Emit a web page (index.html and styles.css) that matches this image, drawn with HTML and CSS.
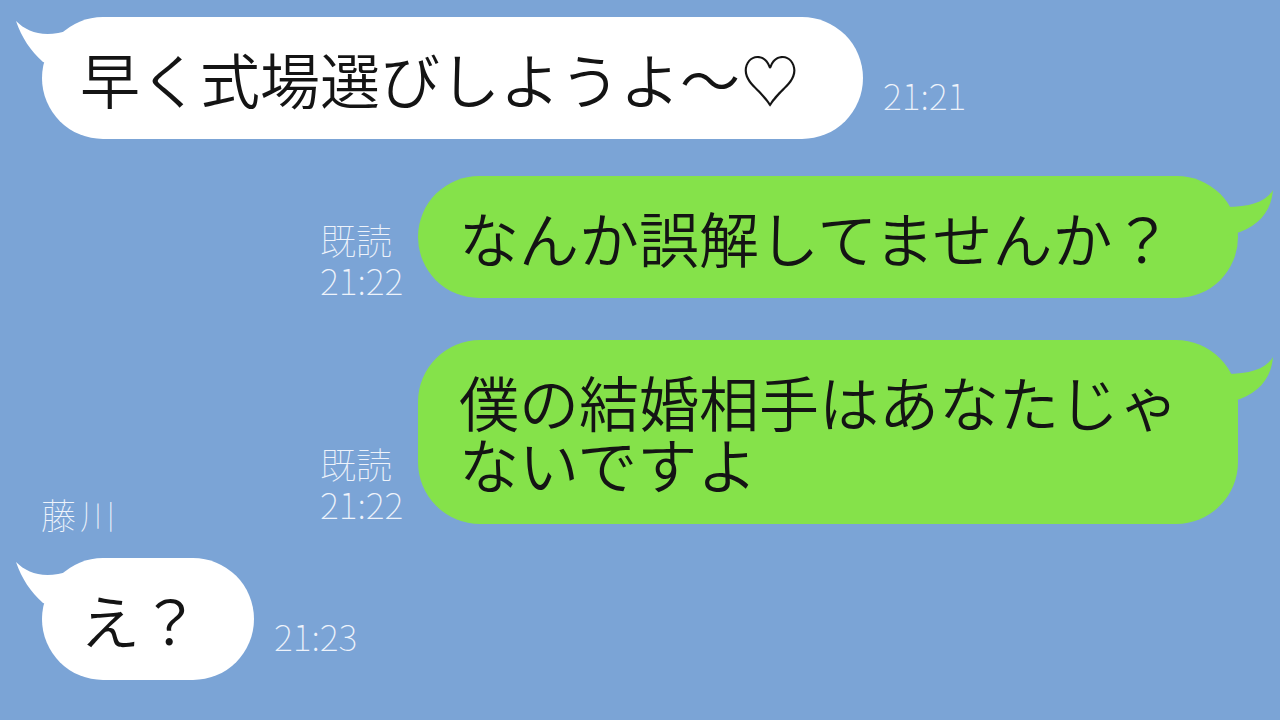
FILE: index.html
```html
<!DOCTYPE html>
<html lang="ja">
<head>
<meta charset="utf-8">
<title>chat</title>
<link rel="stylesheet" href="styles.css">
</head>
<body>
<div class="chat">
  <div class="row row-in row-1">
    <div class="bubble bubble-white bubble-wide">
      <svg class="tail tail-left" width="60" height="60" viewBox="0 0 60 60"><path d="M2,4 C14,16 31,21 56,13 L56,53 L29,45 C16,33 8,21 2,4 Z" fill="#ffffff"/></svg>
      <p class="msg">早く式場選びしようよ〜♡</p>
    </div>
    <div class="time time-in">21:21</div>
  </div>

  <div class="row row-out row-2">
    <div class="meta">
      <div class="read">既読</div>
      <div class="time">21:22</div>
    </div>
    <div class="bubble bubble-green">
      <svg class="tail tail-right" width="60" height="70" viewBox="0 0 60 70"><path d="M55,14 C48,26 32,31 8,31 L8,60 L22,56 C42,48 53,35 55,14 Z" fill="#85e24a"/></svg>
      <p class="msg">なんか誤解してませんか？</p>
    </div>
  </div>

  <div class="row row-out row-3">
    <div class="meta meta-low">
      <div class="read">既読</div>
      <div class="time">21:22</div>
    </div>
    <div class="bubble bubble-green">
      <svg class="tail tail-right" width="60" height="70" viewBox="0 0 60 70"><path d="M55,17 C48,29 32,34 8,34 L8,63 L22,59 C42,51 53,38 55,17 Z" fill="#85e24a"/></svg>
      <p class="msg">僕の結婚相手はあなたじゃ<br>ないですよ</p>
    </div>
  </div>

  <div class="group-in">
    <div class="name">藤川</div>
    <div class="row row-in">
      <div class="bubble bubble-white bubble-short">
        <svg class="tail tail-left" width="60" height="60" viewBox="0 0 60 60"><path d="M2,4 C14,16 31,21 56,13 L56,53 L29,45 C16,33 8,21 2,4 Z" fill="#ffffff"/></svg>
        <p class="msg">え？</p>
      </div>
      <div class="time time-in">21:23</div>
    </div>
  </div>
</div>
</body>
</html>
```

FILE: styles.css
```css
html, body {
  margin: 0;
  padding: 0;
}
body {
  width: 1280px;
  height: 720px;
  overflow: hidden;
  background: #7ba4d6;
  font-family: "Noto Sans CJK JP", "Noto Sans", sans-serif;
}
.chat {
  display: flex;
  flex-direction: column;
  padding-top: 17px;
}
.row {
  display: flex;
  align-items: flex-end;
}
.row-in {
  margin-left: 42px;
  gap: 20px;
}
.row-out {
  justify-content: flex-end;
  margin-right: 42px;
  gap: 10px;
}
.row-2 {
  margin-top: 37px;
}
.row-3 {
  margin-top: 42px;
}
.bubble {
  position: relative;
  box-sizing: border-box;
  border-radius: 62px;
  padding: 30px 40px 30px 38px;
}
.bubble-white {
  background: #ffffff;
}
.bubble-wide {
  width: 821px;
}
.bubble-short {
  padding-right: 54px;
}
.bubble-green {
  background: #85e24a;
  width: 820px;
  padding-left: 41px;
}
.msg {
  margin: 0;
  font-size: 60px;
  line-height: 62px;
  color: #141414;
  font-weight: 350;
  white-space: nowrap;
  position: relative;
}
.tail {
  position: absolute;
  top: 0;
}
.tail-left {
  left: -28px;
}
.tail-right {
  right: -40px;
}
.time, .read {
  font-size: 36px;
  line-height: 38px;
  color: #eef3fb;
  font-weight: 100;
}
.time-in {
  margin-bottom: 26px;
}
.meta {
  display: flex;
  flex-direction: column;
  gap: 2px;
  width: 88px;
}
.meta-low {
  margin-bottom: 2px;
}
.group-in {
  display: flex;
  flex-direction: column;
  margin-top: -30px;
}
.name {
  margin-left: 41px;
  font-size: 35px;
  line-height: 40px;
  letter-spacing: 4px;
  color: #eef3fb;
  font-weight: 100;
  margin-bottom: 24px;
}
```
